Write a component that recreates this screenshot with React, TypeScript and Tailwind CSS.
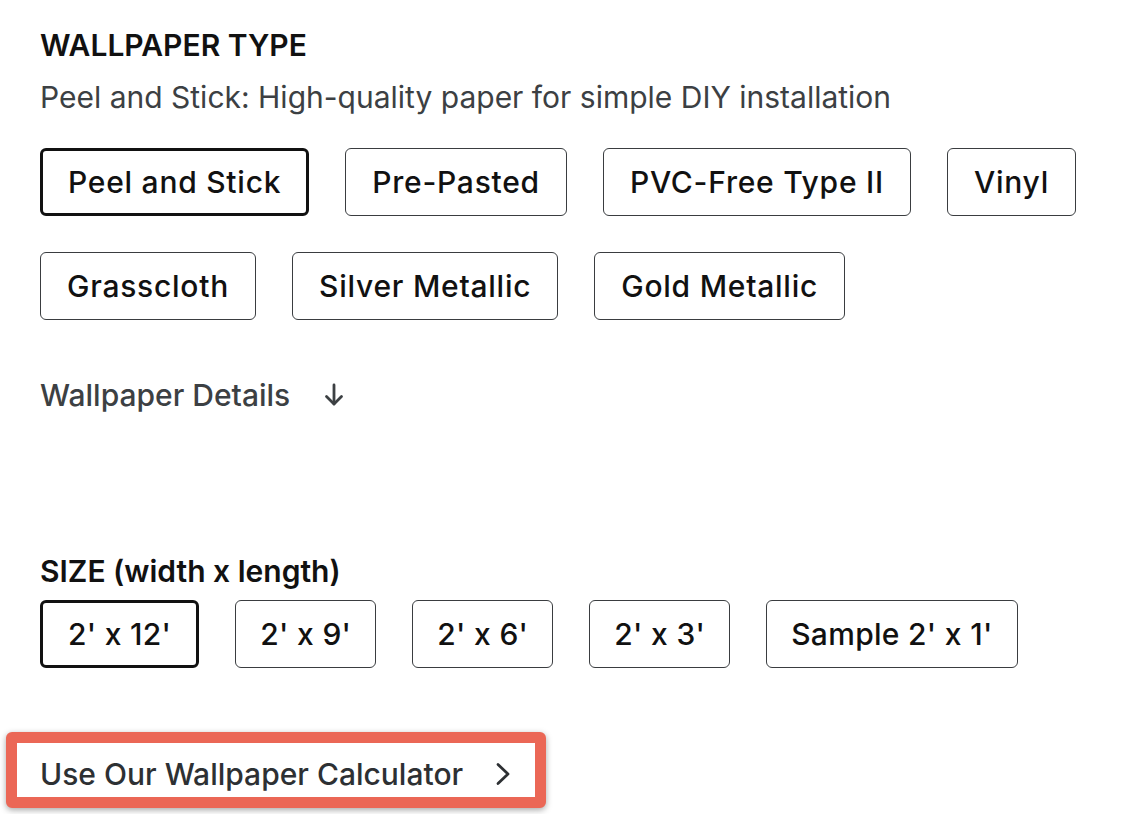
import React from "react";

const types = ["Peel and Stick", "Pre-Pasted", "PVC-Free Type II", "Vinyl", "Grasscloth", "Silver Metallic", "Gold Metallic"];
const sizes = ["2' x 12'", "2' x 9'", "2' x 6'", "2' x 3'", "Sample 2' x 1'"];

function Opt({ label, selected, size }: { label: string; selected?: boolean; size?: boolean }) {
  return (
    <button
      className={
        "h-[68px] rounded-[6px] bg-white text-[30px] font-medium text-[#111] flex items-center justify-center " +
        (size ? "tracking-[0.01em] " : "tracking-[0.025em] ") +
        (selected
          ? "px-[25px] border-[3px] border-[#111]"
          : size
          ? "px-[24px] border-[1.5px] border-[#3a3d40]"
          : "px-[26px] border-[1.5px] border-[#3a3d40]")
      }
    >
      {label}
    </button>
  );
}

export default function App() {
  return (
    <div
      className="w-[1142px] h-[814px] bg-white overflow-hidden pl-[40px] pt-[26px]"
      style={{ fontFamily: "Inter, 'Noto Sans', sans-serif" }}
    >
      <h2 className="text-[30px] leading-[38px] font-semibold text-[#111]">WALLPAPER TYPE</h2>
      <p className="text-[30px] leading-[38px] text-[#3c4043] mt-[14px]">
        Peel and Stick: High-quality paper for simple DIY installation
      </p>
      <div className="flex flex-wrap gap-x-[36px] gap-y-[36px] mt-[32px] w-[1090px]">
        {types.map((t, i) => (
          <Opt key={t} label={t} selected={i === 0} />
        ))}
      </div>
      <div className="flex items-center mt-[56px] text-[30px] leading-[38px] font-medium text-[#3c4043]">
        <span>Wallpaper Details</span>
        <svg className="ml-[32px]" width="24" height="26" viewBox="0 0 24 26" fill="none" stroke="#3c4043" strokeWidth="2.8" strokeLinecap="round" strokeLinejoin="round">
          <path d="M12 3v19" />
          <path d="M4.5 14.5l7.5 7.5 7.5-7.5" />
        </svg>
      </div>
      <h2 className="mt-[138px] text-[30px] leading-[38px] font-semibold text-[#111]">SIZE (width x length)</h2>
      <div className="flex flex-wrap gap-[36px] mt-[10px]">
        {sizes.map((s, i) => (
          <Opt key={s} label={s} selected={i === 0} size />
        ))}
      </div>
      <div className="mt-[64px] -ml-[34px] inline-flex items-center border-[11px] border-[#eb6756] rounded-[6px] shadow-[0_2px_6px_rgba(0,0,0,0.35)] bg-white pl-[23px] pr-[24px] pt-[8px] h-[76px]">
        <div className="flex items-center">
          <span className="text-[30px] leading-[38px] font-medium text-[#2d3033]">Use Our Wallpaper Calculator</span>
          <svg className="ml-[32px]" width="16" height="24" viewBox="0 0 16 24" fill="none" stroke="#2d3033" strokeWidth="2.8" strokeLinecap="round" strokeLinejoin="round">
            <path d="M3 2.5l10 9.5-10 9.5" />
          </svg>
        </div>
      </div>
    </div>
  );
}
